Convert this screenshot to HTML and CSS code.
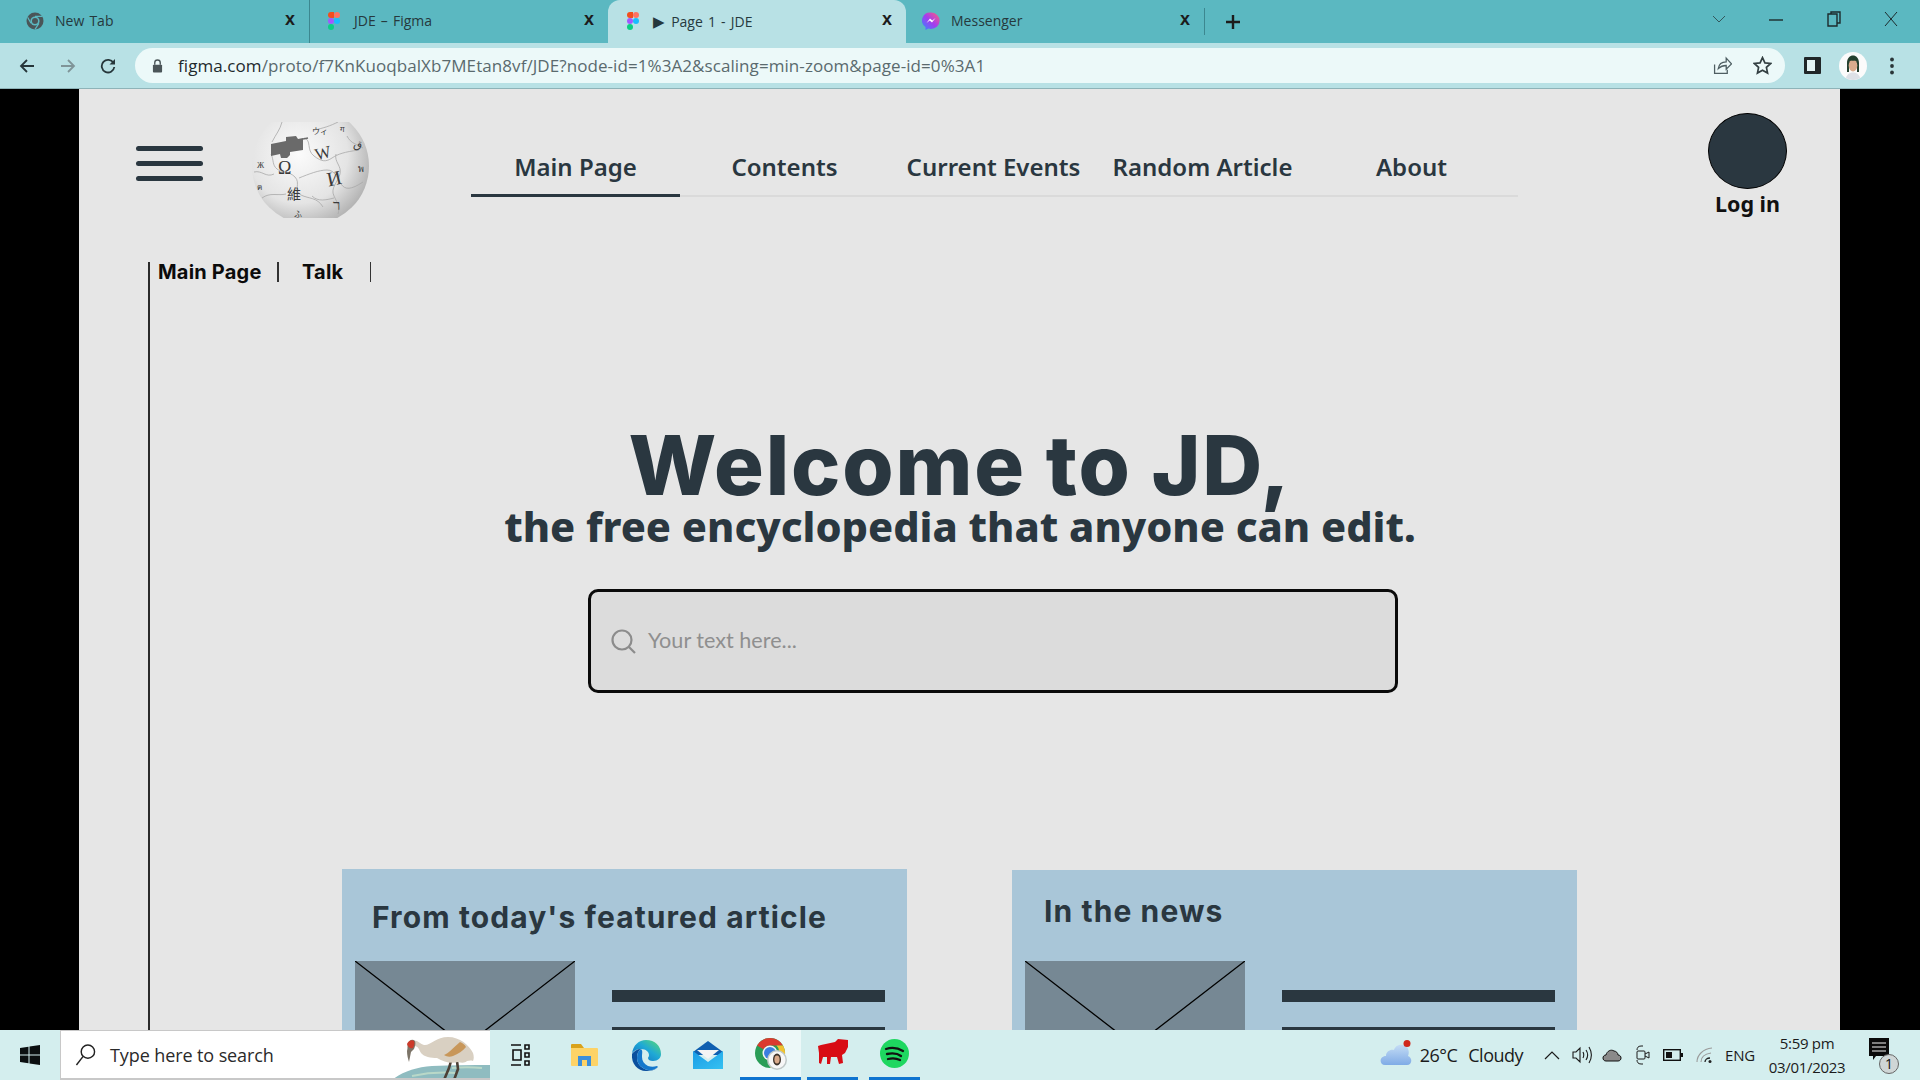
FILE: index.html
```html
<!DOCTYPE html>
<html lang="en">
<head>
<meta charset="utf-8">
<title>Page 1 - JDE</title>
<link rel="stylesheet" href="styles.css">
</head>
<body>
<div class="screen">
  <div class="tabbar">
    <div class="tab tab-first">
      <svg class="fav" viewBox="0 0 18 18"><circle cx="9" cy="9" r="8.5" fill="#4a5558"/><circle cx="9" cy="9" r="4.6" fill="#5bb8c1"/><circle cx="9" cy="9" r="3" fill="#4a5558"/><path d="M9 4.4h7M5 11.3L1.6 5.2M12.9 11.4L9 17.4" stroke="#5bb8c1" stroke-width="1.2"/></svg>
      <span class="tab-title">New Tab</span><span class="tab-x">x</span>
    </div>
    <div class="tab tab-sep">
      <svg class="fav" viewBox="0 0 12 18"><circle cx="3" cy="3" r="3" fill="#f24e1e"/><circle cx="9" cy="3" r="3" fill="#ff7262"/><rect x="3" y="0" width="3" height="6" fill="#f24e1e"/><circle cx="3" cy="9" r="3" fill="#a259ff"/><circle cx="9" cy="9" r="3" fill="#1abcfe"/><circle cx="3" cy="15" r="3" fill="#0acf83"/></svg>
      <span class="tab-title">JDE – Figma</span><span class="tab-x">x</span>
    </div>
    <div class="tab tab-active">
      <svg class="fav" viewBox="0 0 12 18"><circle cx="3" cy="3" r="3" fill="#f24e1e"/><circle cx="9" cy="3" r="3" fill="#ff7262"/><rect x="3" y="0" width="3" height="6" fill="#f24e1e"/><circle cx="3" cy="9" r="3" fill="#a259ff"/><circle cx="9" cy="9" r="3" fill="#1abcfe"/><circle cx="3" cy="15" r="3" fill="#0acf83"/></svg>
      <span class="tab-title"><span class="play">▶</span> Page 1 - JDE</span><span class="tab-x">x</span>
    </div>
    <div class="tab tab-end">
      <svg class="fav" viewBox="0 0 18 18"><defs><linearGradient id="ms" x1="0" y1="1" x2="1" y2="0"><stop offset="0" stop-color="#2f8bff"/><stop offset=".5" stop-color="#a33cf0"/><stop offset="1" stop-color="#ff5f7a"/></linearGradient></defs><path d="M9 .5a8.4 8 0 0 1 0 16.4c-1 0-1.800-.1-2.600-.4L3.500 18v-3A8.300 8 0 0 1 9 .5z" fill="url(#ms)"/><path d="M4.500 11L8 6.500l2.300 2L13.500 6 10 10.500l-2.300-2z" fill="#fff"/></svg>
      <span class="tab-title">Messenger</span><span class="tab-x">x</span>
    </div>
    <svg class="newtab" viewBox="0 0 16 16"><path d="M8 1v14M1 8h14" stroke="#1c1c1c" stroke-width="2.400"/></svg>
    <div class="winctl">
      <svg class="win-chev" viewBox="0 0 14 8"><path d="M1 1l6 6 6-6" fill="none" stroke="#33575c" stroke-width="1"/></svg>
      <svg class="win-min" viewBox="0 0 14 2"><path d="M0 1h14" stroke="#1c2a2c" stroke-width="1.400"/></svg>
      <svg class="win-max" viewBox="0 0 14 16"><path d="M4 3V1h9v11h-3M1 3h9v12H1z" fill="none" stroke="#1c2a2c" stroke-width="1.400"/></svg>
      <svg class="win-close" viewBox="0 0 14 16"><path d="M1 1l12 14M13 1L1 15" stroke="#1c2a2c" stroke-width="1"/></svg>
    </div>
  </div>

  <div class="toolbar">
    <svg class="nav-ic ic-back" viewBox="0 0 16 16"><path d="M15 8H2M8 2L2 8l6 6" fill="none" stroke="#26363a" stroke-width="1.800"/></svg>
    <svg class="nav-ic ic-fwd" viewBox="0 0 16 16"><path d="M1 8h13M8 2l6 6-6 6" fill="none" stroke="#7f9498" stroke-width="1.800"/></svg>
    <svg class="nav-ic ic-reload" viewBox="0 0 16 16"><path d="M13.500 5A6.300 6.300 0 1 0 14.300 9" fill="none" stroke="#26363a" stroke-width="1.800"/><path d="M15 1v5.500H9.500z" fill="#26363a"/></svg>
    <div class="omnibox">
      <svg class="lock" viewBox="0 0 12 15"><path d="M3 6V4a3 3 0 0 1 6 0v2" fill="none" stroke="#4a5558" stroke-width="1.500"/><rect x="1" y="6" width="10" height="8.500" rx="1" fill="#4a5558"/></svg>
      <span class="url"><span class="url-host">figma.com</span>/proto/f7KnKuoqbalXb7MEtan8vf/JDE?node-id=1%3A2&amp;scaling=min-zoom&amp;page-id=0%3A1</span>
      <svg class="omni-share" viewBox="0 0 18 18"><path d="M1.500 8v8.500h12V13M5 12c.5-4 3.500-6.500 7.500-6.500V2l5 5.500-5 5V9C9.500 9 7 10 5 12z" fill="none" stroke="#4e5e62" stroke-width="1.200"/></svg>
      <svg class="omni-star" viewBox="0 0 18 18"><path d="M9 1.500l2.300 5 5.400.6-4 3.700 1.100 5.400L9 13.500l-4.800 2.700 1.100-5.400-4-3.700 5.400-.6z" fill="none" stroke="#333f42" stroke-width="1.600"/></svg>
    </div>
    <svg class="side-ic" viewBox="0 0 17 17"><rect width="17" height="17" rx="1" fill="#202628"/><rect x="3" y="3" width="8" height="11" fill="#e4f4f5"/></svg>
    <svg class="avatar" viewBox="0 0 28 28"><circle cx="14" cy="14" r="14" fill="#fbfbfb"/><path d="M8 20V11c0-5 3-7.500 6-7.500s6 2.500 6 7.500v9h-2V11h-8v9z" fill="#24402f"/><ellipse cx="14" cy="13.500" rx="4.300" ry="6" fill="#d9ab8d"/><path d="M10 8c2 1 6 1 8 0l-1-3h-6z" fill="#24402f"/><path d="M7 26c1-4 4-5.500 7-5.500s6 1.500 7 5.500a14 14 0 0 1-14 0z" fill="#dde0e6"/></svg>
    <svg class="dots" viewBox="0 0 4 18"><circle cx="2" cy="2.500" r="1.900" fill="#2a3538"/><circle cx="2" cy="9" r="1.900" fill="#2a3538"/><circle cx="2" cy="15.500" r="1.900" fill="#2a3538"/></svg>
  </div>

  <div class="viewport">
    <div class="page">
      <header class="site-head">
        <div class="burger"><i></i><i></i><i></i></div>
        <svg class="globe" viewBox="0 0 117 96">
          <defs>
            <radialGradient id="ball" cx=".4" cy=".4" r=".7"><stop offset="0" stop-color="#fbfbfb"/><stop offset=".6" stop-color="#e4e4e4"/><stop offset="1" stop-color="#a6a6a6"/></radialGradient>
            <clipPath id="ballclip"><rect x="0" y="0" width="117" height="96"/></clipPath>
          </defs>
          <g clip-path="url(#ballclip)">
            <circle cx="58.500" cy="44" r="58.500" fill="url(#ball)"/>
            <g fill="none" stroke="#a8a8a8" stroke-width=".8">
              <path d="M19 32c3 6 1 11 6 15s12 2 18 8-2 14 6 18 16 2 22 12"/>
              <path d="M52 16c8 2 2 12 10 18s12 6 18 2 12-6 27-8"/>
              <path d="M47 56c10-4 20-8 28-8s10 8 14 14 10 6 22-2"/>
              <path d="M84 32c-2 8 6 12 4 20s-10 14-6 22 6 12 4 18"/>
              <path d="M2 50c8-2 12 6 20 2M10 76c8-6 16-2 24-4M60 74c6 6 14 4 22 2M95 14c4 8 10 8 16 12"/>
              <path d="M30 0c-2 8-6 12-10 20M62 8c10-2 16-4 24-8"/>
            </g>
            <path d="M19 22l15-3 0-4 10-1 2 3 5-1v12l-13 2 0 3-3 3-6 0-1-4-9 2z" fill="#6a6a6a"/>
            <path d="M51 17l5-1" stroke="#6a6a6a" stroke-width="1.500"/>
            <g fill="#3a3a3a" font-family="'Liberation Serif','Noto Sans CJK SC',serif">
              <text x="26" y="52" font-size="18">Ω</text>
              <text x="63" y="37" font-size="17" transform="rotate(-14 70 32)">W</text>
              <text x="75" y="63" font-size="20" transform="rotate(-12 83 57)">И</text>
              <text x="35" y="77" font-size="14">維</text>
              <text x="81" y="88" font-size="15">ר</text>
              <text x="60" y="12" font-size="8">ウィ</text>
              <text x="101" y="26" font-size="11" transform="rotate(15 105 24)">ق</text>
              <text x="5" y="46" font-size="8">Ж</text>
              <text x="5" y="68" font-size="8">ค</text>
              <text x="106" y="50" font-size="9">พ</text>
              <text x="42" y="95" font-size="8">ふ</text>
              <text x="88" y="10" font-size="8">ग</text>
            </g>
          </g>
        </svg>
        <nav class="main-nav">
          <a class="nav-item is-current">Main Page</a>
          <a class="nav-item">Contents</a>
          <a class="nav-item">Current Events</a>
          <a class="nav-item">Random Article</a>
          <a class="nav-item">About</a>
        </nav>
        <div class="login">
          <div class="login-dot"></div>
          <span class="login-text">Log in</span>
        </div>
      </header>

      <main class="article">
        <div class="page-tabs">
          <span class="page-tab">Main Page</span>
          <span class="page-tab tab-talk">Talk</span>
        </div>
        <section class="hero">
          <h1 class="hero-title">Welcome to JD,</h1>
          <p class="hero-sub">the free encyclopedia that anyone can edit.</p>
        </section>
        <div class="search">
          <svg class="search-ic" viewBox="0 0 25 25"><circle cx="11" cy="11" r="9.500" fill="none" stroke="#8c8c8c" stroke-width="2.200"/><path d="M18 18l6 6" stroke="#8c8c8c" stroke-width="2.200"/></svg>
          <span class="search-text">Your text here...</span>
        </div>
        <div class="cards">
          <article class="card card-left">
            <h2 class="card-title">From today's featured article</h2>
            <div class="card-body">
              <svg class="thumb" viewBox="0 0 220 170" preserveAspectRatio="none"><rect width="220" height="170" fill="#768894"/><path d="M0 0l220 170M220 0L0 170" stroke="#000" stroke-width="1.300"/></svg>
              <div class="lines"><i></i><i></i></div>
            </div>
          </article>
          <article class="card card-right">
            <h2 class="card-title">In the news</h2>
            <div class="card-body">
              <svg class="thumb" viewBox="0 0 220 170" preserveAspectRatio="none"><rect width="220" height="170" fill="#768894"/><path d="M0 0l220 170M220 0L0 170" stroke="#000" stroke-width="1.300"/></svg>
              <div class="lines"><i></i><i></i></div>
            </div>
          </article>
        </div>
      </main>
    </div>
  </div>

  <footer class="taskbar">
    <svg class="start" viewBox="0 0 20 20"><path d="M0 3l8.500-1.200V9.500H0zM9.500 1.600L20 0v9.500H9.500zM0 10.500h8.500v7.700L0 17zM9.500 10.500H20V20L9.500 18.400z" fill="#0b0f10"/></svg>
    <div class="taskbar-search">
      <svg class="tb-mag" viewBox="0 0 22 24"><circle cx="13.500" cy="9" r="7" fill="none" stroke="#222" stroke-width="1.500"/><path d="M8.500 14L1.500 23" stroke="#222" stroke-width="1.500"/></svg>
      <span class="tb-search-text">Type here to search</span>
      <svg class="crane" viewBox="0 0 98 50">
        <path d="M0 50C10 42 24 37 40 36c20-1 40-1 58-1v15z" fill="#8fbcc0"/>
        <path d="M20 46c14-3 30-4 44-3M60 38c10-1 20-1 30 0" stroke="#b9d8c8" stroke-width="2" fill="none"/>
        <path d="M59 31l-2 7-5 12M65 31l1 8-4 11" fill="none" stroke="#4d4036" stroke-width="2.600"/>
        <path d="M20 11c5-2 8 3 12 4 6 1 12-8 24-8 12 0 21 8 25 16 1 3 1 6 0 8-3-1-4 0-6 0-2 2-5 2-9 1-7 2-14 0-21-4-6 0-13-1-16-5-2-3-2-7-7-7z" fill="#d9d0c2"/>
        <path d="M52 25c4-1 10-8 16-13 3 1 5 3 6 5-3 4-8 7-13 9-3 1-6 1-9-1z" fill="#c8975a"/>
        <path d="M15 21c1-3 0-6 1-8s4-5 7-2c1 3 0 5-1 8l-1 1-2 2-2 10c-1-3-2-7-2-11z" fill="#7c7468"/>
        <path d="M15 14c1-3 5-5 7-3 1 2 0 5-1 7-3 1-5-1-6-4z" fill="#cc3a2a"/>
      </svg>
    </div>
    <div class="tb-apps">
      <span class="tb-app"><svg class="ic-task" viewBox="0 0 20 22"><path d="M1 1h10M1 21h10M3 6h8v10H3zM15 1h4v4h-4zM15 9h4v4h-4zM15 17h4v4h-4z" fill="none" stroke="#101010" stroke-width="1.600"/></svg></span>
      <span class="tb-app"><svg class="ic-folder" viewBox="0 0 27 22"><path d="M0 1a1 1 0 0 1 1-1h9l3 4H0z" fill="#d9a21b"/><path d="M0 4h26a1 1 0 0 1 1 1v16a1 1 0 0 1-1 1H1a1 1 0 0 1-1-1z" fill="#fdd367"/><path d="M7 22V12h13v10h-4v-6h-5v6z" fill="#3b8fdc"/></svg></span>
      <span class="tb-app"><svg class="ic-edge" viewBox="0 0 30 31"><defs><linearGradient id="eg" x1="0" y1="1" x2="1" y2="0"><stop offset="0" stop-color="#0f66c0"/><stop offset=".55" stop-color="#1fa9d6"/><stop offset="1" stop-color="#5bdc6e"/></linearGradient></defs><path d="M1 14C2 5 8 0 15 0c9 0 15 6 15 14 0 4-3 7-8 7-3 0-5-1-5-3 0-1 1-1 1-3 0-3-3-6-8-6C6 9 2 11 1 14z" fill="url(#eg)"/><path d="M1 14c2-3 5-5 9-5-3 2-4 5-4 9 0 6 5 11 11 12 4 1 7-1 10-3-3 3-7 4-12 4C7 31 0 24 1 14z" fill="#0a4f9e"/><path d="M10 9c-3 2-4 5-4 9 0 6 5 11 11 12 4 1 7-1 10-3l-1-1c-3 1-6 1-9 0-4-2-6-5-6-9 0-4 1-6-1-8z" fill="#1578cc"/></svg></span>
      <span class="tb-app"><svg class="ic-mail" viewBox="0 0 30 28"><defs><linearGradient id="mg" x1="0" y1="0" x2="1" y2="1"><stop offset="0" stop-color="#1a9be6"/><stop offset="1" stop-color="#35c1f1"/></linearGradient></defs><path d="M0 11L15 0l15 11v3H0z" fill="#0f5fb0"/><path d="M4 9h22l-11 9z" fill="#f4f4f4"/><path d="M0 10l15 11 15-11v18H0z" fill="url(#mg)"/></svg></span>
      <span class="tb-app tb-on tb-hover"><svg class="ic-chrome" viewBox="0 0 32 32"><circle cx="15" cy="15" r="15" fill="#2a9d57"/><path d="M15 0a15 15 0 0 1 13 7.500H15a7.500 7.500 0 0 0-6.500 3.800L2.100 7.500A15 15 0 0 1 15 0z" fill="#db3a2f"/><path d="M28 7.500a15 15 0 0 1-13 22.500l6.500-11.300a7.500 7.500 0 0 0 0-11.200z" fill="#f2c230"/><circle cx="15" cy="15" r="7.500" fill="#f4f4f4"/><circle cx="15" cy="15" r="6" fill="#3b7ee0"/><circle cx="22" cy="22" r="10" fill="#bfc8c8"/><circle cx="22" cy="22" r="8.500" fill="#f7f7f7"/><ellipse cx="22" cy="21.500" rx="4" ry="6" fill="#40352c"/><ellipse cx="22" cy="21.500" rx="2.600" ry="4" fill="#d8a98a"/></svg></span>
      <span class="tb-app tb-on tb-dog"><svg class="ic-dog" viewBox="0 0 30 25"><path d="M3 6l14-3 3-3 10 1v7l-3 6-3 2 1 8-4 1-2-7h-6l-1 7H9v-7H5l-2 7-2-1V14L0 7z" fill="#d80c14"/></svg></span>
      <span class="tb-app tb-on tb-spot"><svg class="ic-spot" viewBox="0 0 29 29"><circle cx="14.500" cy="14.500" r="14.500" fill="#1ed760"/><path d="M6 10c6-2 12-1 17 2M7 15c5-1 10-1 14 2M8 20c4-1 8-1 12 1" fill="none" stroke="#111" stroke-width="2.300" stroke-linecap="round"/></svg></span>
    </div>
    <div class="tb-tray">
      <svg class="ic-cloud" viewBox="0 0 32 26"><defs><linearGradient id="cl" x1="0" y1="0" x2="0" y2="1"><stop offset="0" stop-color="#c4dcf5"/><stop offset="1" stop-color="#7fabe6"/></linearGradient></defs><path d="M5 25c-6 0-6-9 1-9 0-5 5-7 8-6 1-3 4-6 9-5 5 1 7 6 5 11 5 2 4 9-1 9z" fill="url(#cl)"/><circle cx="27" cy="3.500" r="3.500" fill="#d0281d"/></svg>
      <span class="tb-weather">26°C</span><span class="tb-cloudy">Cloudy</span>
      <svg class="tr-chev" viewBox="0 0 16 9"><path d="M1 8l7-7 7 7" fill="none" stroke="#1b1b1b" stroke-width="1.200"/></svg>
      <svg class="tr-vol" viewBox="0 0 20 18"><path d="M1 6h3l4-4v14l-4-4H1zM11 6c1 2 1 4 0 6M14 4c2 3 2 7 0 10M17 1c3 5 3 11 0 16" fill="none" stroke="#1b1b1b" stroke-width="1.100"/></svg>
      <svg class="tr-drive" viewBox="0 0 20 14"><path d="M4 13c-4 0-4-6 0-6 1-4 5-6 8-4 2 0 4 2 4 4 4 0 4 6 0 6z" fill="#8a8a8a" stroke="#111" stroke-width="1"/></svg>
      <svg class="tr-meet" viewBox="0 0 14 20"><path d="M1 5c0-2 1-4 4-4h2M1 15c0 2 1 4 4 4h2" fill="none" stroke="#1b1b1b"/><rect x="1" y="6" width="8" height="8" rx="1" fill="none" stroke="#1b1b1b"/><path d="M9 9l4-2v6l-4-2" fill="none" stroke="#1b1b1b"/></svg>
      <svg class="tr-batt" viewBox="0 0 20 12"><rect x=".7" y=".7" width="16.600" height="10.600" fill="none" stroke="#111" stroke-width="1.400"/><rect x="3" y="3" width="6" height="6" fill="#111"/><rect x="18" y="4" width="2" height="4" fill="#111"/></svg>
      <svg class="tr-wifi" viewBox="0 0 17 16"><path d="M1 15C1 8 7 2 16 1M5 15c0-4 3-8 10-9" fill="none" stroke="#9a9a9a" stroke-width="1.100"/><path d="M9 15c0-2 2-4 5-4" fill="none" stroke="#222" stroke-width="1.300"/><circle cx="14" cy="14.500" r="1.500" fill="#222"/></svg>
      <span class="tr-lang">ENG</span>
      <div class="tr-clock"><span>5:59 pm</span><span>03/01/2023</span></div>
      <svg class="tr-note" viewBox="0 0 32 34"><path d="M0 0h20v18H7l-3 4v-4H0z" fill="#0b0b0b"/><path d="M3 5h14M3 9h14M3 13h14" stroke="#f4f4f4" stroke-width="1.100"/></svg>
      <span class="tr-badge">1</span>
    </div>
  </footer>
</div>
</body>
</html>
```
FILE: styles.css
```css
* { box-sizing: border-box; }
html, body { margin: 0; height: 100%; overflow: hidden; }
body { font-family: "Noto Sans", sans-serif; color: #2a3740; }
.screen { width: 1920px; height: 1080px; display: flex; flex-direction: column; overflow: hidden; }

/* browser tab strip */
.tabbar { height: 43px; flex: none; background: #5bb8c1; display: flex; align-items: stretch; padding-left: 10px; }
.tab { width: 298px; display: flex; align-items: center; padding: 0 0 2px 16px; position: relative; color: #26393d; font-size: 14px; font-family: "Open Sans", sans-serif; }
.tab-first { width: 299px; }
.tab-sep { border-left: 1px solid #3c8790; width: 299px; padding-left: 15px; }
.tab-active { background: #b8e1e5; border-radius: 12px 12px 0 0; width: 298px; padding-left: 16px; }
.tab-end { width: 299px; border-right: 1px solid #3c8790; margin-top: 8px; margin-bottom: 8px; padding-left: 16px; }
.fav { width: 18px; height: 18px; flex: none; margin-right: 11px; }
.tab-title { flex: 1; white-space: nowrap; word-spacing: 1.500px; }
.play { font-size: 15px; margin-right: 1px; }
.tab-x { width: 12px; margin-right: 12px; font-family: "Liberation Sans", sans-serif; font-weight: 700; font-size: 18px; line-height: 1; color: #1c1c1c; margin-top: -4px; }
.newtab { width: 16px; height: 16px; align-self: center; margin-left: 20px; }
.winctl { margin-left: auto; display: flex; align-items: center; }
.win-chev { width: 14px; height: 8px; margin: -6px 43px 0 0; }
.win-min { width: 14px; height: 2px; margin-right: 44px; margin-top: -4px; }
.win-max { width: 14px; height: 16px; margin-right: 43px; margin-top: -6px; }
.win-close { width: 14px; height: 16px; margin-right: 22px; margin-top: -6px; }

/* browser toolbar */
.toolbar { height: 46px; flex: none; background: #b8e1e5; border-bottom: 1px solid #8eb3b8; display: flex; align-items: center; padding: 0 0 0 19px; }
.nav-ic { width: 16px; height: 16px; flex: none; }
.ic-fwd { margin-left: 25px; }
.ic-reload { margin-left: 24px; }
.omnibox { margin-left: 19px; width: 1650px; height: 35px; background: #ecf9f9; border-radius: 18px; display: flex; align-items: center; padding-left: 17px; }
.lock { width: 11px; height: 14px; flex: none; }
.url { margin-left: 15px; font-family: "Open Sans", sans-serif; font-size: 17px; color: #5a6a6e; white-space: nowrap; letter-spacing: .07px; flex: 1; }
.url-host { color: #1e2a2d; }
.omni-share { width: 19px; height: 19px; flex: none; margin-right: 21px; }
.omni-star { width: 19px; height: 19px; flex: none; margin-right: 13px; }
.side-ic { width: 17px; height: 17px; flex: none; margin-left: 19px; }
.avatar { width: 28px; height: 28px; flex: none; margin-left: 18px; }
.dots { width: 4px; height: 18px; flex: none; margin-left: 23px; }

/* viewport */
.viewport { flex: 1; min-height: 0; background: #000; padding: 0 80px 0 79px; overflow: hidden; }
.page { height: 100%; background: #e6e6e6; display: flex; flex-direction: column; overflow: hidden; }
.site-head { flex: none; height: 173px; display: flex; align-items: flex-start; }
.burger { width: 67px; margin: 57px 0 0 57px; display: flex; flex-direction: column; gap: 10px; flex: none; }
.burger i { display: block; height: 5px; border-radius: 3px; background: #2a3740; }
.globe { width: 117px; height: 96px; margin: 33px 0 0 49px; flex: none; }
.main-nav { width: 1047px; margin: 60px 0 0 102px; display: flex; border-bottom: 2px solid #dadada; flex: none; height: 48px; }
.nav-item { width: 209px; text-align: center; font-size: 24px; font-weight: 600; color: #2a3740; font-family: "Noto Sans", sans-serif; height: 48px; line-height: 36px; white-space: nowrap; }
.is-current { border-bottom: 3px solid #2a3740; }
.login { margin: 24px 0 0 190px; width: 79px; display: flex; flex-direction: column; align-items: center; flex: none; }
.login-dot { width: 79px; height: 76px; flex: none; border-radius: 50%; background: #2a3740; border: 1px solid #000; }
.login-text { font-size: 21.500px; font-weight: 700; color: #111; font-family: "Noto Sans", sans-serif; line-height: 28px; margin-top: 1px; white-space: nowrap; }

.article { flex: 1; min-height: 0; margin: 0 70px 0 69px; border-left: 2px solid #2a2a2a; display: flex; flex-direction: column; }
.page-tabs { display: flex; height: 20px; flex: none; }
.page-tab { font-family: "Inter", sans-serif; font-weight: 700; font-size: 20px; line-height: 21px; color: #0b0b0b; padding: 0 17px 0 8px; width: 129px; border-right: 2px solid #333; white-space: nowrap; letter-spacing: .2px; }
.tab-talk { padding: 0 0 0 23px; width: 92px; border-right-width: 1px; }
.hero { flex: none; text-align: center; margin-top: 147px; }
.hero-title { margin: 0; font-family: "Inter", sans-serif; font-weight: 800; font-size: 83px; line-height: 73px; color: #2a3740; white-space: nowrap; letter-spacing: 1.800px; }
.hero-sub { margin: 0; font-family: "Noto Sans", sans-serif; font-weight: 800; font-size: 41.500px; line-height: 48px; color: #2a3740; white-space: nowrap; }
.search { width: 810px; height: 104px; flex: none; margin: 39px 0 0 438px; border: 3px solid #0a0a0a; border-radius: 10px; background: #dcdcdc; display: flex; align-items: center; padding-left: 20px; }
.search-ic { width: 25px; height: 25px; flex: none; }
.search-text { margin: 0 0 2px 12px; font-family: "Lato", sans-serif; font-size: 21.600px; color: #8f8f8f; }
.cards { display: flex; gap: 105px; flex: none; margin: 176px 0 0 192px; align-items: flex-start; }
.card { width: 565px; height: 300px; flex: none; background: #a9c6d8; display: flex; flex-direction: column; }
.card-right { margin-top: 1px; }
.card-title { margin: 0; font-family: "Inter", sans-serif; font-weight: 700; font-size: 30px; line-height: 40px; color: #2a3740; white-space: nowrap; letter-spacing: 1.100px; }
.card-left .card-title { padding: 28px 0 0 30px; height: 92px; }
.card-right .card-title { padding: 21px 0 0 32px; height: 91px; }
.card-body { display: flex; padding-left: 13px; }
.thumb { width: 220px; height: 170px; flex: none; display: block; }
.lines { margin: 29px 0 0 37px; width: 273px; }
.lines i { display: block; height: 12px; background: #2a3740; margin-bottom: 25px; }

/* windows taskbar */
.taskbar { height: 50px; flex: none; background: #d4eeee; display: flex; align-items: stretch; font-family: "Open Sans", sans-serif; color: #1b1b1b; }
.start { width: 20px; height: 20px; align-self: center; margin: 0 20px; flex: none; }
.taskbar-search { width: 430px; flex: none; background: #fff; border: 1px solid #c8c8c8; border-right: 0; border-bottom-width: 2px; display: flex; align-items: center; padding-left: 14px; overflow: hidden; }
.tb-mag { width: 21px; height: 23px; flex: none; }
.tb-search-text { margin-left: 14px; font-size: 18px; letter-spacing: -.1px; white-space: nowrap; color: #2a2a2a; }
.crane { width: 98px; height: 50px; margin-left: auto; flex: none; }
.tb-apps { display: flex; flex: none; gap: 2px; }
.tb-app { width: 60px; display: flex; align-items: center; justify-content: center; }
.tb-app:nth-child(2) { margin-left: 2px; }
.tb-on { border-bottom: 3px solid #0f74d0; }
.tb-hover { background: #ecf8f8; width: 61px; }
.tb-dog { width: 51px; margin-left: 4px; }
.tb-spot { width: 51px; margin-left: 9px; }
.ic-task { width: 20px; height: 22px; }
.ic-folder { width: 27px; height: 22px; }
.ic-edge { width: 30px; height: 31px; }
.ic-mail { width: 30px; height: 28px; }
.ic-chrome { width: 32px; height: 32px; }
.ic-dog { width: 30px; height: 25px; margin-bottom: 5px; }
.ic-spot { width: 29px; height: 29px; }
.tb-tray { margin-left: auto; display: flex; align-items: center; position: relative; padding-right: 19px; }
.ic-cloud { width: 32px; height: 26px; flex: none; margin-top: -4px; }
.tb-weather { margin-left: 8px; font-size: 18px; white-space: nowrap; letter-spacing: -.5px; }
.tb-cloudy { margin-left: 11px; font-size: 18px; letter-spacing: -.5px; white-space: nowrap; }
.tr-chev { width: 16px; height: 9px; margin-left: 21px; flex: none; }
.tr-vol { width: 20px; height: 18px; margin-left: 12px; flex: none; }
.tr-drive { width: 20px; height: 14px; margin-left: 10px; flex: none; }
.tr-meet { width: 14px; height: 20px; margin-left: 14px; flex: none; }
.tr-batt { width: 20px; height: 12px; margin-left: 13px; flex: none; }
.tr-wifi { width: 17px; height: 16px; margin-left: 13px; flex: none; }
.tr-lang { margin-left: 12px; font-size: 15px; letter-spacing: -.2px; }
.tr-clock { margin-left: 14px; width: 76px; display: flex; flex-direction: column; align-items: center; font-size: 15px; line-height: 24px; letter-spacing: -.3px; white-space: nowrap; }
.tr-note { width: 32px; height: 34px; margin-left: 24px; flex: none; }
.tr-badge { position: absolute; right: 21px; top: 24px; width: 20px; height: 20px; border-radius: 50%; border: 1px solid #666; background: #cfd6d6; font-size: 14px; line-height: 18px; text-align: center; color: #111; }
```
